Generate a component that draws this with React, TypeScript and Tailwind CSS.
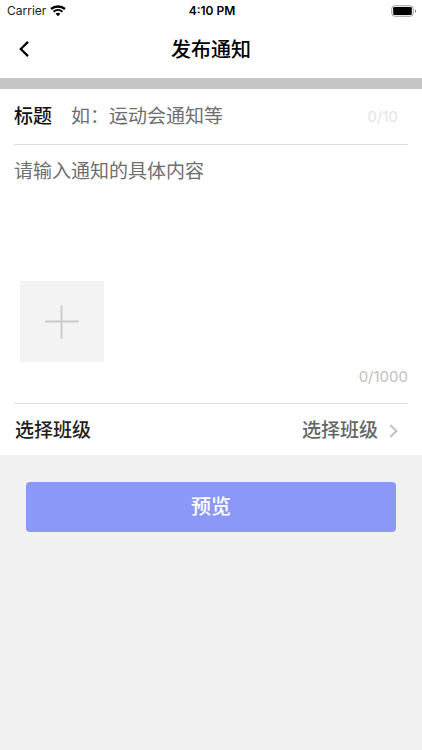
import { useState } from "react";

const TITLE_LIMIT = 10;
const CONTENT_LIMIT = 1000;

function WifiIcon() {
  return (
    <svg width="16" height="12" viewBox="0 0 16 12" fill="none" stroke="#000" aria-hidden="true">
      <path d="M1 4a11 11 0 0 1 14 0" strokeWidth="2.4" />
      <path d="M3.5 6.7a7 7 0 0 1 9 0" strokeWidth="2" />
      <path d="M5.6 8.8a3.6 3.6 0 0 1 4.8 0L8 11.2z" fill="#000" stroke="none" />
    </svg>
  );
}

function BatteryIcon() {
  return (
    <svg width="26" height="12" viewBox="0 0 26 12" aria-hidden="true">
      <rect x="0.75" y="0.75" width="21.5" height="10.5" rx="3" fill="#fff" stroke="#9b9b9b" />
      <rect x="2.2" y="2" width="18.6" height="8" rx="1.2" fill="#000" />
      <path d="M24 4.2c1.4.4 1.4 3.2 0 3.6z" fill="#777" />
    </svg>
  );
}

function StatusBar() {
  return (
    <div className="grid h-[22px] grid-cols-[1fr_auto_1fr] items-center pr-[5px] pl-[7px] font-['Inter',sans-serif] text-xs text-black">
      <div className="flex items-center gap-1">
        <span className="text-[#222]">Carrier</span>
        <WifiIcon />
      </div>
      <span className="text-center font-semibold">4:10 PM</span>
      <div className="flex justify-end">
        <BatteryIcon />
      </div>
    </div>
  );
}

export default function App() {
  const [title, setTitle] = useState("");
  const [content, setContent] = useState("");

  return (
    <div
      lang="zh-CN"
      className="min-h-screen bg-[#f1f1f1] font-['Inter','Noto_Sans_CJK_SC',sans-serif] text-[19px] leading-7"
    >
      <header className="bg-white">
        <StatusBar />
        <div className="grid h-14 grid-cols-[48px_1fr_48px] items-center">
          <button type="button" aria-label="返回" className="flex h-full items-center pb-[2px] pl-[19px]">
            <svg width="10" height="16" viewBox="0 0 10 16" fill="none" stroke="#000" strokeWidth="2.2" aria-hidden="true">
              <path d="M9 .9 1.8 8 9 15.1" />
            </svg>
          </button>
          <h1 className="text-center text-xl font-medium text-black">发布通知</h1>
        </div>
      </header>

      <main>
        <form onSubmit={(e) => e.preventDefault()}>
          <div className="border-t-[11px] border-[#c5c5c5] bg-white px-[14px]">
            <div className="flex h-14 items-center border-b border-[#dedede]">
              <label htmlFor="title" className="font-medium text-[#111]">
                标题
              </label>
              <input
                id="title"
                value={title}
                maxLength={TITLE_LIMIT}
                onChange={(e) => setTitle(e.target.value)}
                placeholder="如：运动会通知等"
                className="ml-[19px] h-7 min-w-0 flex-1 text-[#333] outline-none placeholder:text-[#6e6e6e]"
              />
              <span className="pr-[10px] text-[15px] text-[#e4e4e4]">
                {title.length}/{TITLE_LIMIT}
              </span>
            </div>

            <div className="flex flex-col border-b border-[#dedede] pb-3">
              <textarea
                aria-label="通知内容"
                value={content}
                maxLength={CONTENT_LIMIT}
                onChange={(e) => setContent(e.target.value)}
                placeholder="请输入通知的具体内容"
                className="h-[136px] resize-none pt-[13px] text-[#333] outline-none placeholder:text-[#6e6e6e]"
              />
              <button
                type="button"
                aria-label="添加图片"
                className="ml-[6px] flex h-[81px] w-[84px] items-center justify-center bg-[#f3f3f3]"
              >
                <svg width="34" height="34" viewBox="0 0 34 34" stroke="#c9c9c9" strokeWidth="1.8" strokeLinecap="round" aria-hidden="true">
                  <path d="M16.5 1v32M1 16.5h32" />
                </svg>
              </button>
              <span className="self-end pt-px text-[15px] text-[#c0c0c0]">
                {content.length}/{CONTENT_LIMIT}
              </span>
            </div>

            <div className="flex h-[51px] items-center pt-[2px]">
              <label htmlFor="class" className="flex-1 pl-px font-medium text-[#222]">
                选择班级
              </label>
              <select id="class" defaultValue="" className="h-7 w-[76px] appearance-none font-medium text-[#666] outline-none">
                <option value="">选择班级</option>
              </select>
              <svg
                className="mr-[10px] ml-[11px]"
                width="9"
                height="14"
                viewBox="0 0 9 14"
                fill="none"
                stroke="#c4c4c4"
                strokeWidth="2.2"
                aria-hidden="true"
              >
                <path d="M1.2 1 7.4 7l-6.2 6" />
              </svg>
            </div>
          </div>

          <div className="px-[26px] pt-[27px]">
            <button type="submit" className="h-[50px] w-full rounded bg-[#8b98f8] text-xl font-medium text-white">
              预览
            </button>
          </div>
        </form>
      </main>
    </div>
  );
}
